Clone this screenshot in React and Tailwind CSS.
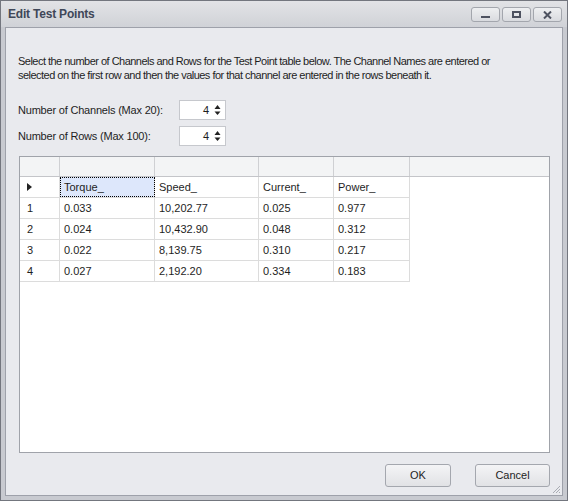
import React from 'react';

const font = { fontFamily: '"Liberation Sans", Arial, sans-serif' };

const columns = [
  { name: 'Torque_', w: 'w-[95px]' },
  { name: 'Speed_', w: 'w-[104px]' },
  { name: 'Current_', w: 'w-[75px]' },
  { name: 'Power_', w: 'w-[76px]' },
];

const rows = [
  ['0.033', '10,202.77', '0.025', '0.977'],
  ['0.024', '10,432.90', '0.048', '0.312'],
  ['0.022', '8,139.75', '0.310', '0.217'],
  ['0.027', '2,192.20', '0.334', '0.183'],
];

function TitleButton({ children }) {
  return (
    <div className="w-[29px] h-[15px] rounded-[3px] border border-[#a3a6ad] bg-gradient-to-b from-[#eeeff1] to-[#d9dbdf] flex items-center justify-center">
      {children}
    </div>
  );
}

function SpinBox({ value }) {
  return (
    <div className="w-[47px] h-[20px] bg-white border border-[#c6c8cd] flex items-center justify-end pr-[4px] gap-[5px] text-[11px] text-[#1e1e1e]">
      <span>{value}</span>
      <svg width="7" height="12" viewBox="0 0 7 12">
        <path d="M3.5 1 L6.5 5 L0.5 5 Z" fill="#222" />
        <path d="M0.5 7.5 L6.5 7.5 L3.5 11 Z" fill="#222" />
      </svg>
    </div>
  );
}

function DialogButton({ children, w }) {
  return (
    <button className={`${w} h-[23px] rounded-[3px] border border-[#a4a7ae] bg-gradient-to-b from-[#f4f4f6] to-[#e1e2e5] text-[11px] text-[#1e1e1e]`}>
      {children}
    </button>
  );
}

export default function App() {
  return (
    <div style={font} className="w-[568px] h-[501px] border border-[#73767e] bg-[#c8cad0] flex flex-col">
      {/* Title bar */}
      <div className="h-[26px] shrink-0 flex items-center justify-between pl-[7px] pr-[5px] bg-gradient-to-b from-[#e2e3e6] to-[#d0d2d7]">
        <span className="text-[12px] font-bold text-[#3f4758] tracking-[-0.2px]">Edit Test Points</span>
        <div className="flex gap-[2px] mt-[1px]">
          <TitleButton>
            <div className="w-[9px] h-[2px] bg-[#4d5260] mt-[5px]" />
          </TitleButton>
          <TitleButton>
            <div className="w-[9px] h-[7px] border-2 border-[#4d5260]" />
          </TitleButton>
          <TitleButton>
            <svg width="9" height="8" viewBox="0 0 9 8">
              <path d="M1 0.5 L8 7.5 M8 0.5 L1 7.5" stroke="#4d5260" strokeWidth="2" />
            </svg>
          </TitleButton>
        </div>
      </div>

      {/* Client area */}
      <div className="flex-1 px-[4px] pb-[4px] flex">
        <div className="flex-1 border border-[#9ea1aa] bg-[#e9eaee] flex flex-col pl-[12px] pr-[12px] relative">
          <p className="mt-[26px] text-[11px] leading-[14px] text-[#1e1e1e] w-[482px] tracking-[-0.52px]">
            Select the number of Channels and Rows for the Test Point table below. The Channel Names are entered or
            selected on the first row and then the values for that channel are entered in the rows beneath it.
          </p>

          <div className="mt-[18px] flex flex-col gap-[6px] text-[11px] text-[#1e1e1e]">
            <div className="flex items-center">
              <span className="w-[161px] tracking-[-0.2px]">Number of Channels (Max 20):</span>
              <SpinBox value="4" />
            </div>
            <div className="flex items-center">
              <span className="w-[161px] tracking-[-0.2px]">Number of Rows (Max 100):</span>
              <SpinBox value="4" />
            </div>
          </div>

          {/* Grid */}
          <div className="mt-[10px] ml-[1px] w-[531px] h-[297px] border border-[#a0a3aa] bg-white text-[11px] text-[#1e1e1e] flex flex-col">
            <div className="h-[20px] flex bg-[#f3f4f5] border-b border-[#c4c5c9]">
              <div className="w-[40px] border-r border-[#cfd0d3]" />
              {columns.map((c) => (
                <div key={c.name} className={`${c.w} border-r border-[#cfd0d3]`} />
              ))}
            </div>
            <div className="flex h-[21px] w-[390px] border-b border-[#dcdcdc]">
              <div className="w-[40px] border-r border-[#dcdcdc] flex items-center pl-[7px]">
                <svg width="5" height="8" viewBox="0 0 5 8">
                  <path d="M0 0 L5 4 L0 8 Z" fill="#222" />
                </svg>
              </div>
              {columns.map((c, i) => (
                <div
                  key={c.name}
                  className={`${c.w} border-r border-[#dcdcdc] flex items-center pl-[4px] ${
                    i === 0 ? 'bg-[#dde7fb] outline-1 outline-dotted outline-black -outline-offset-1' : ''
                  }`}
                >
                  {c.name}
                </div>
              ))}
            </div>
            {rows.map((r, ri) => (
              <div key={ri} className="flex h-[21px] w-[390px] border-b border-[#dcdcdc]">
                <div className="w-[40px] border-r border-[#dcdcdc] flex items-center pl-[7px]">{ri + 1}</div>
                {r.map((v, ci) => (
                  <div key={ci} className={`${columns[ci].w} border-r border-[#dcdcdc] flex items-center pl-[4px]`}>
                    {v}
                  </div>
                ))}
              </div>
            ))}
          </div>

          <div className="mt-[11px] flex justify-end gap-[24px]">
            <DialogButton w="w-[66px]">OK</DialogButton>
            <DialogButton w="w-[75px]">Cancel</DialogButton>
          </div>

          {/* resize grip */}
          <svg className="absolute right-[1px] bottom-[1px]" width="10" height="10" viewBox="0 0 10 10">
            <path d="M9 2 L2 9 M9 5 L5 9 M9 8 L8 9" stroke="#a9acb3" strokeWidth="1" />
          </svg>
        </div>
      </div>
    </div>
  );
}
